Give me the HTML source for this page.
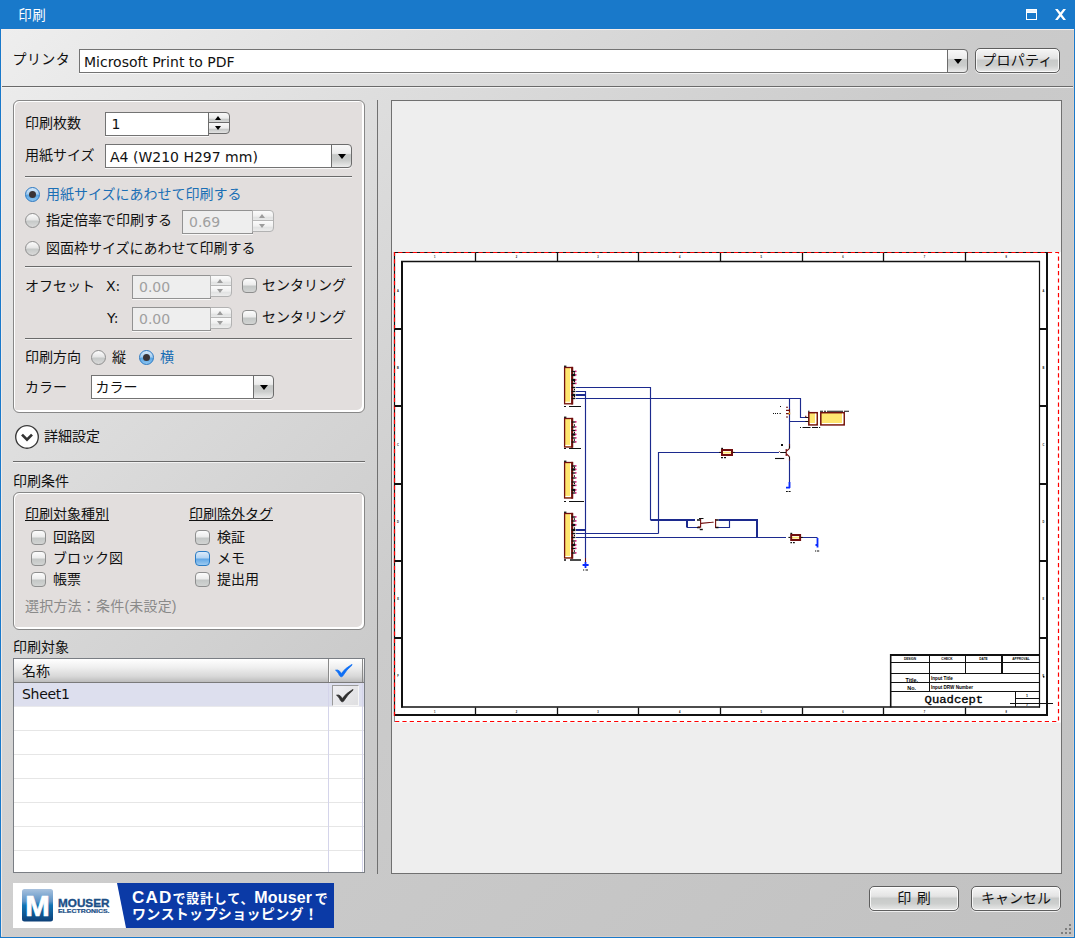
<!DOCTYPE html>
<html lang="ja">
<head>
<meta charset="utf-8">
<title>印刷</title>
<style>
*{box-sizing:border-box;margin:0;padding:0}
html,body{width:1075px;height:938px;overflow:hidden}
body{position:relative;background:#1979ca;font-family:"Liberation Sans","Noto Sans CJK JP",sans-serif;font-size:14px;color:#111;line-height:1}
.lat{font-family:"DejaVu Sans","Liberation Sans","Noto Sans CJK JP",sans-serif}
.abs,.abs-all *{position:absolute}
#win{position:absolute;left:1px;top:29px;width:1073px;height:908px;background:linear-gradient(135deg,#eeeeee 0%,#dedede 22%,#cbcbcb 50%,#c1c1c1 100%);overflow:hidden}
#title{position:absolute;left:0;top:0;width:1075px;height:29px;background:#1979ca;color:#fff}
#title .t{position:absolute;left:18.3px;top:8.5px;font-size:13.5px;letter-spacing:.4px;white-space:nowrap}
.txt{position:absolute;white-space:nowrap;height:20px;line-height:20px}
.sep{position:absolute;height:2px;border-top:1px solid #6a6a6a;border-bottom:1px solid #f2f2f2}
.grp{position:absolute;border:1px solid #878787;border-radius:6px;background:#e2dedd;box-shadow:inset 1px 1px 0 #fff,inset -2px -2px 0 #fff}
.inp{position:absolute;background:#fff;border:1px solid #737373;box-shadow:0 1px 0 rgba(255,255,255,.75)}
.inp.dis{background:#eeeeee;border-color:#929292;color:#a0a0a0}
.inp span{position:absolute;left:5px;top:0;line-height:23px;white-space:nowrap}
.cbtn{position:absolute;border:1px solid #6c6c6c;border-radius:0 4px 4px 0;background:linear-gradient(#f8f8f8 0%,#ececec 38%,#c6c8c7 44%,#cacccb 70%,#ececec 100%);box-shadow:0 1px 0 rgba(255,255,255,.75)}
.cbtn:after{content:"";position:absolute;left:5.5px;top:9.2px;border:4.5px solid transparent;border-top:5px solid #000;border-bottom:0}
.spin{position:absolute;width:22px;height:22px;border:1px solid #6c6c6c;border-radius:0 4px 4px 0;background:linear-gradient(#f8f8f8 0,#ececec 5px,#c8cac9 6.5px,#d6d8d7 9px,#6c6c6c 9px,#6c6c6c 10px,#f8f8f8 10px,#ececec 15px,#c8cac9 16.5px,#e2e2e2 20px)}
.spin i{position:absolute;left:6.3px;border:3.8px solid transparent}
.spin i.u{top:3px;border-bottom:4px solid #000;border-top:0}
.spin i.d{top:13px;border-top:4px solid #000;border-bottom:0}
.spin.dis{border-color:#b2b2b2;background:linear-gradient(#fbfbfb 0,#f0f0f0 5px,#e2e3e3 6.5px,#e8e9e9 9px,#b8b8b8 9px,#b8b8b8 10px,#fbfbfb 10px,#f0f0f0 15px,#e2e3e3 16.5px,#ececec 20px)}
.spin.dis i.u{border-bottom-color:#9c9c9c}
.spin.dis i.d{border-top-color:#9c9c9c}
.rad{position:absolute;width:15px;height:15px;border-radius:50%;border:1px solid #8e8e8e;background:linear-gradient(#fcfcfc 0%,#e6e6e6 45%,#c6c9c8 55%,#dadada 100%)}
.rad.on{border-color:#2a78c2;background:linear-gradient(#d6e8f8 0%,#a8cff0 45%,#5aa6e4 55%,#8cc4f0 100%)}
.rad.on:after{content:"";position:absolute;left:3px;top:3px;width:7px;height:7px;border-radius:50%;background:#3a3436}
.chk{position:absolute;width:15px;height:15px;border-radius:4px;border:1px solid #8e8e8e;background:linear-gradient(#fcfcfc 0%,#ececec 45%,#c4c7c6 55%,#d2d4d3 100%)}
.chk.hov{border-color:#2b7cc4;background:linear-gradient(#dcebfa 0%,#b4d4f2 45%,#62a8e6 55%,#9ccaf0 100%)}
.btn{position:absolute;height:25px;border:1px solid #5e5e5e;border-radius:5px;background:linear-gradient(#f6f6f6 0%,#e4e4e4 40%,#c8cac9 50%,#cdcfce 72%,#e9e9e9 100%);text-align:center;line-height:23px;white-space:nowrap;box-shadow:inset 0 0 0 1px rgba(255,255,255,.8),0 1px 0 rgba(255,255,255,.7)}
.blue{color:#1b6fb5}
.gray{color:#8a8a8a}
u{text-decoration:underline;text-underline-offset:1.4px;text-decoration-thickness:1px}
</style>
</head>
<body>
<div id="title"><span class="t">印刷</span>
<svg style="position:absolute;left:1026px;top:9px" width="11" height="11" viewBox="0 0 11 11" shape-rendering="crispEdges"><rect x="0" y="0" width="11" height="11" fill="#fff"/><rect x="1" y="1" width="9" height="2" fill="#eef5fb"/><rect x="1" y="4" width="9" height="6" fill="#1979ca"/></svg>
<svg style="position:absolute;left:1055px;top:9px" width="11" height="11" viewBox="0 0 11 11"><path d="M0 0 H2.7 L5.5 3.6 L8.3 0 H11 L6.9 5.5 L11 11 H8.3 L5.5 7.4 L2.7 11 H0 L4.1 5.5 Z" fill="#fff"/></svg>
</div>
<div id="win"><div id="o" style="position:absolute;left:-1px;top:-29px;width:1075px;height:938px">
<div style="position:absolute;left:1px;top:29px;width:1073px;height:1px;background:#f6eeea"></div><div style="position:absolute;left:1px;top:29px;width:1px;height:908px;background:#f6eeea;opacity:.8"></div><div style="position:absolute;left:1073px;top:30px;width:1px;height:907px;background:#d8cdc8;opacity:.8"></div><div style="position:absolute;left:1px;top:936px;width:1073px;height:1px;background:#d8cdc8;opacity:.8"></div>
<!--LEFT-->
<!-- printer row -->
<div class="txt" style="left:12.5px;top:49px;letter-spacing:.4px">プリンタ</div>
<div class="inp" style="left:79px;top:49px;width:869px;height:24px"><span class="lat" style="left:4px;top:1px">Microsoft Print to PDF</span></div>
<div class="cbtn" style="left:947px;top:49px;width:21px;height:24px"></div>
<div class="btn" style="left:975px;top:48px;width:85px;letter-spacing:.3px">プロパティ</div>
<div class="sep" style="left:2px;top:86px;width:1071px"></div>

<!-- group 1 -->
<div class="grp" style="left:13px;top:100px;width:352px;height:313px"></div>
<div class="txt" style="left:25px;top:113px">印刷枚数</div>
<div class="inp" style="left:105px;top:112px;width:104px;height:24px"><span class="lat" style="left:5.5px">1</span></div>
<div class="spin" style="left:208px;top:112px"><i class="u"></i><i class="d"></i></div>
<div class="txt" style="left:25px;top:145px">用紙サイズ</div>
<div class="inp" style="left:105px;top:144px;width:228px;height:24px"><span class="lat" style="left:4px;top:1px">A4 (W210 H297 mm)</span></div>
<div class="cbtn" style="left:331px;top:144px;width:21px;height:24px"></div>
<div class="sep" style="left:25px;top:176px;width:327px"></div>
<div class="rad on" style="left:25px;top:187px"></div>
<div class="txt blue" style="left:46px;top:184px">用紙サイズにあわせて印刷する</div>
<div class="rad" style="left:25px;top:213px"></div>
<div class="txt" style="left:46px;top:210px">指定倍率で印刷する</div>
<div class="inp dis" style="left:182px;top:210px;width:71px;height:24px"><span class="lat" style="left:6px">0.69</span></div>
<div class="spin dis" style="left:252px;top:210px"><i class="u"></i><i class="d"></i></div>
<div class="rad" style="left:25px;top:241px"></div>
<div class="txt" style="left:46px;top:238px">図面枠サイズにあわせて印刷する</div>
<div class="sep" style="left:25px;top:266px;width:327px"></div>
<div class="txt" style="left:25px;top:276px">オフセット</div>
<div class="txt lat" style="left:106px;top:276px">X:</div>
<div class="inp dis" style="left:132px;top:275px;width:79px;height:24px"><span class="lat" style="left:6px">0.00</span></div>
<div class="spin dis" style="left:210px;top:275px"><i class="u"></i><i class="d"></i></div>
<div class="chk" style="left:242px;top:278px"></div>
<div class="txt" style="left:262px;top:275px">センタリング</div>
<div class="txt lat" style="left:107px;top:308px">Y:</div>
<div class="inp dis" style="left:132px;top:307px;width:79px;height:24px"><span class="lat" style="left:6px">0.00</span></div>
<div class="spin dis" style="left:210px;top:307px"><i class="u"></i><i class="d"></i></div>
<div class="chk" style="left:242px;top:310px"></div>
<div class="txt" style="left:262px;top:307px">センタリング</div>
<div class="sep" style="left:25px;top:338px;width:327px"></div>
<div class="txt" style="left:25px;top:347px">印刷方向</div>
<div class="rad" style="left:91px;top:350px"></div>
<div class="txt" style="left:112px;top:347px">縦</div>
<div class="rad on" style="left:139px;top:350px"></div>
<div class="txt blue" style="left:160px;top:347px">横</div>
<div class="txt" style="left:25px;top:377px">カラー</div>
<div class="inp" style="left:91px;top:375px;width:164px;height:24px"><span style="left:3.5px">カラー</span></div>
<div class="cbtn" style="left:253px;top:375px;width:21px;height:24px"></div>

<!-- expander -->
<svg style="position:absolute;left:14px;top:424px" width="26" height="26" viewBox="0 0 26 26"><circle cx="13" cy="12.9" r="11.3" fill="#fff" stroke="#3a3a3a" stroke-width="1.35"/><path d="M8 10.6 L13 15.6 L18 10.6" fill="none" stroke="#333" stroke-width="2.7"/></svg>
<div class="txt" style="left:44px;top:426px">詳細設定</div>
<div class="sep" style="left:13px;top:461px;width:352px"></div>

<!-- group 2 -->
<div class="txt" style="left:13px;top:471px">印刷条件</div>
<div class="grp" style="left:13px;top:492px;width:352px;height:138px"></div>
<div class="txt" style="left:25px;top:504px"><u>印刷対象種別</u></div>
<div class="chk" style="left:31px;top:530px"></div><div class="txt" style="left:53px;top:527px">回路図</div>
<div class="chk" style="left:31px;top:551px"></div><div class="txt" style="left:53px;top:548px">ブロック図</div>
<div class="chk" style="left:31px;top:572px"></div><div class="txt" style="left:53px;top:569px">帳票</div>
<div class="txt" style="left:189px;top:504px"><u>印刷除外タグ</u></div>
<div class="chk" style="left:195px;top:530px"></div><div class="txt" style="left:217px;top:527px">検証</div>
<div class="chk hov" style="left:195px;top:551px"></div><div class="txt" style="left:217px;top:548px">メモ</div>
<div class="chk" style="left:195px;top:572px"></div><div class="txt" style="left:217px;top:569px">提出用</div>
<div class="txt gray" style="left:25px;top:596px;letter-spacing:.2px">選択方法：条件(未設定)</div>

<!-- table -->
<div class="txt" style="left:13px;top:637px">印刷対象</div>
<div id="tbl" style="position:absolute;left:13px;top:658px;width:352px;height:215px;background:#fff;border:1px solid #7a7e84;overflow:hidden">
<div style="position:absolute;left:0;top:0;width:350px;height:24px;background:linear-gradient(#ffffff 0%,#f0f0f0 35%,#d8d8d8 75%,#bcbcbc 100%);border-bottom:1px solid #7a7a7a"></div>
<div style="position:absolute;left:314px;top:0;width:1px;height:23px;background:#8a8a8a"></div>
<div style="position:absolute;left:315px;top:0;width:1px;height:23px;background:#fafafa"></div>
<div style="position:absolute;left:348px;top:0;width:1px;height:23px;background:#8a8a8a"></div>
<div class="txt" style="left:8px;top:2px">名称</div>
<div style="position:absolute;left:0;top:24px;width:350px;height:24px;background:#dddfee;border-bottom:1px solid #e9e9ec"></div>
<div class="txt lat" style="left:8px;top:25px;letter-spacing:-.3px">Sheet1</div>
<div style="position:absolute;left:0;top:48px;width:350px;height:168px;background:repeating-linear-gradient(#fff 0,#fff 23px,#e6e6e6 23px,#e6e6e6 24px)"></div>
<div style="position:absolute;left:314px;top:24px;width:1px;height:190px;background:#d4d4ea"></div>
<div style="position:absolute;left:348px;top:24px;width:1px;height:190px;background:#d4d4ea"></div>
<div style="position:absolute;left:318px;top:26px;width:27px;height:21px;border:1px solid;border-color:#9a9a9a #f6f6f6 #f6f6f6 #9a9a9a;background:linear-gradient(135deg,#f0f0f4,#dedee0)"></div>
<svg style="position:absolute;left:321px;top:5px" width="18" height="14" viewBox="0 0 18 14"><path d="M0.5 6.2 Q2.5 5.4 4.2 6.8 Q5.6 8.2 6.3 9.6 Q9.5 4.5 16.8 0.4 L17.2 1 Q11.5 5.6 7.6 12.2 Q6.6 13.2 5.4 12.6 Q4.2 11.6 3.6 9.8 Q2.6 7.6 0.5 6.2Z" fill="#0d6ef5" stroke="#0d6ef5" stroke-width="0.7"/></svg>
<svg style="position:absolute;left:322px;top:30px" width="18" height="14" viewBox="0 0 18 14"><path d="M0.5 6.2 Q2.5 5.4 4.2 6.8 Q5.6 8.2 6.3 9.6 Q9.5 4.5 16.8 0.4 L17.2 1 Q11.5 5.6 7.6 12.2 Q6.6 13.2 5.4 12.6 Q4.2 11.6 3.6 9.8 Q2.6 7.6 0.5 6.2Z" fill="#2e2e2e" stroke="#2e2e2e" stroke-width="0.7"/></svg>
</div>

<!--PREVIEW-->
<div style="position:absolute;left:377px;top:100px;width:1px;height:774px;background:#707070"></div>
<svg style="position:absolute;left:391px;top:100px" width="671" height="774" viewBox="391 100 671 774" font-family="Liberation Sans,sans-serif">
<rect x="391.5" y="100.5" width="670" height="773" fill="#eeeeee" stroke="#707070"/>
<rect x="394" y="252" width="667" height="470.5" fill="#fff"/>
<path d="M394.5 716 V252.5 H1048" fill="none" stroke="#111" stroke-width="1.2"/>
<path d="M394 715 H1047 V252" fill="none" stroke="#111" stroke-width="2"/>
<path d="M394.5 716 V252.5 H1058.5 V721.5 H394" fill="none" stroke="#ff0000" stroke-width="1.2" stroke-dasharray="4.2 3.1"/><path d="M394.5 716 V722" stroke="#8a8a8a" stroke-width="1"/>
<path d="M402 261 V707.5" fill="none" stroke="#111" stroke-width="2"/>
<path d="M401 261.5 H1040" fill="none" stroke="#111" stroke-width="1.5"/>
<path d="M1039.5 261 V707.5" fill="none" stroke="#111" stroke-width="1.2"/>
<path d="M401 707 H1040" fill="none" stroke="#111" stroke-width="1.6"/>
<path d="M475.5 253 V261 M475.5 707.5 V715 M557.5 253 V261 M557.5 707.5 V715 M638.5 253 V261 M638.5 707.5 V715 M720.5 253 V261 M720.5 707.5 V715 M802.5 253 V261 M802.5 707.5 V715 M883.5 253 V261 M883.5 707.5 V715 M965.5 253 V261 M965.5 707.5 V715 " stroke="#111" stroke-width="1.3" fill="none"/><path d="M394.5 329 H402 M1039.5 329 H1047 M394.5 406 H402 M1039.5 406 H1047 M394.5 484 H402 M1039.5 484 H1047 M394.5 561 H402 M1039.5 561 H1047 M394.5 638 H402 M1039.5 638 H1047 " stroke="#111" stroke-width="1.8" fill="none"/>
<text x="434.8" y="258.4" font-size="2.6" font-weight="bold" text-anchor="middle" fill="#111">1</text><text x="434.8" y="712.6" font-size="2.6" font-weight="bold" text-anchor="middle" fill="#111">1</text><text x="516.4" y="258.4" font-size="2.6" font-weight="bold" text-anchor="middle" fill="#111">2</text><text x="516.4" y="712.6" font-size="2.6" font-weight="bold" text-anchor="middle" fill="#111">2</text><text x="598.1" y="258.4" font-size="2.6" font-weight="bold" text-anchor="middle" fill="#111">3</text><text x="598.1" y="712.6" font-size="2.6" font-weight="bold" text-anchor="middle" fill="#111">3</text><text x="679.7" y="258.4" font-size="2.6" font-weight="bold" text-anchor="middle" fill="#111">4</text><text x="679.7" y="712.6" font-size="2.6" font-weight="bold" text-anchor="middle" fill="#111">4</text><text x="761.3" y="258.4" font-size="2.6" font-weight="bold" text-anchor="middle" fill="#111">5</text><text x="761.3" y="712.6" font-size="2.6" font-weight="bold" text-anchor="middle" fill="#111">5</text><text x="842.9" y="258.4" font-size="2.6" font-weight="bold" text-anchor="middle" fill="#111">6</text><text x="842.9" y="712.6" font-size="2.6" font-weight="bold" text-anchor="middle" fill="#111">6</text><text x="924.6" y="258.4" font-size="2.6" font-weight="bold" text-anchor="middle" fill="#111">7</text><text x="924.6" y="712.6" font-size="2.6" font-weight="bold" text-anchor="middle" fill="#111">7</text><text x="1006.2" y="258.4" font-size="2.6" font-weight="bold" text-anchor="middle" fill="#111">8</text><text x="1006.2" y="712.6" font-size="2.6" font-weight="bold" text-anchor="middle" fill="#111">8</text><text x="398" y="291.6" font-size="2.6" font-weight="bold" text-anchor="middle" fill="#111">A</text><text x="1043.4" y="291.6" font-size="2.6" font-weight="bold" text-anchor="middle" fill="#111">A</text><text x="398" y="368.8" font-size="2.6" font-weight="bold" text-anchor="middle" fill="#111">B</text><text x="1043.4" y="368.8" font-size="2.6" font-weight="bold" text-anchor="middle" fill="#111">B</text><text x="398" y="445.9" font-size="2.6" font-weight="bold" text-anchor="middle" fill="#111">C</text><text x="1043.4" y="445.9" font-size="2.6" font-weight="bold" text-anchor="middle" fill="#111">C</text><text x="398" y="523.1" font-size="2.6" font-weight="bold" text-anchor="middle" fill="#111">D</text><text x="1043.4" y="523.1" font-size="2.6" font-weight="bold" text-anchor="middle" fill="#111">D</text><text x="398" y="600.2" font-size="2.6" font-weight="bold" text-anchor="middle" fill="#111">E</text><text x="1043.4" y="600.2" font-size="2.6" font-weight="bold" text-anchor="middle" fill="#111">E</text><text x="398" y="677.4" font-size="2.6" font-weight="bold" text-anchor="middle" fill="#111">F</text><text x="1043.4" y="677.4" font-size="2.6" font-weight="bold" text-anchor="middle" fill="#111">F</text>
<path d="M576 387.5 H650.5 V520 M576 391.5 H585.5 V562 M576 398.5 H800.5 V417.5 H806 M789.5 398.5 V448 M789.5 459 V487 M789.5 421.5 H806 M658.5 533.5 V452.5 H721 M733.5 452.5 H779 M576 533.5 H658.5 M576 537.5 H786 M801 537.5 H817.5 M687 527.5 H697 M715 527.5 H729.5 V520" fill="none" stroke="#1c2a8e" stroke-width="1.15"/>
<path d="M576 395 H585.5 M576 530 H585.5 M650.5 520 H695 M718.5 520 H757 V537.5 M687 520 V527.5" fill="none" stroke="#1c2a8e" stroke-width="2"/>
<path d="M582.6 565 H588.6 M585.5 562 V568 M786 487.6 H790 M789.5 482 V488 M817.5 538 V547.5 M815.5 545 H818" fill="none" stroke="#0a2cff" stroke-width="1.8"/>
<path d="M585.5 558 V562" stroke="#720f0f" stroke-width="1"/>
<rect x="564.6" y="367.5" width="7.9" height="36.30000000000001" fill="#ffe670" stroke="#720f0f" stroke-width="1.3"/><rect x="570" y="368.5" width="1.2" height="34.30000000000001" fill="#fff"/><rect x="565.5" y="401.7" width="6" height="1.1" fill="#fff"/><rect x="571.1" y="366.9" width="2" height="37.500000000000014" fill="#720f0f"/><rect x="564" y="365.6" width="2.4" height="1.3" fill="#111"/><rect x="571.6" y="370.85" width="3.8" height="1.3" fill="#111"/><rect x="575.1" y="370.60" width="1.4" height="1.5" fill="#e0107a"/><rect x="571.6" y="373.85" width="3.8" height="2.3" fill="#111"/><rect x="575.1" y="374.10" width="1.4" height="1.5" fill="#e0107a"/><rect x="574" y="372.30" width="1" height="1.5" fill="#111"/><rect x="571.6" y="378.85" width="3.8" height="2.3" fill="#111"/><rect x="575.1" y="379.10" width="1.4" height="1.5" fill="#e0107a"/><rect x="571.6" y="382.85" width="3.8" height="1.3" fill="#111"/><rect x="575.1" y="382.60" width="1.4" height="1.5" fill="#e0107a"/><rect x="574" y="380.80" width="1" height="1.5" fill="#111"/><rect x="571.6" y="386.85" width="3.8" height="1.3" fill="#111"/><rect x="571.6" y="390.85" width="3.8" height="1.3" fill="#111"/><rect x="574" y="388.80" width="1" height="1.5" fill="#111"/><rect x="571.6" y="393.85" width="3.8" height="2.3" fill="#111"/><rect x="571.6" y="397.85" width="3.8" height="1.3" fill="#111"/><rect x="574" y="395.80" width="1" height="1.5" fill="#111"/>
<rect x="564.6" y="418.5" width="7.9" height="28.5" fill="#ffe670" stroke="#720f0f" stroke-width="1.3"/><rect x="570" y="419.5" width="1.2" height="26.5" fill="#fff"/><rect x="565.5" y="444.9" width="6" height="1.1" fill="#fff"/><rect x="571.1" y="417.9" width="2" height="29.7" fill="#720f0f"/><rect x="564" y="416.6" width="2.4" height="1.3" fill="#111"/><rect x="571.6" y="421.35" width="3.8" height="1.3" fill="#111"/><rect x="575.1" y="421.10" width="1.4" height="1.5" fill="#e0107a"/><rect x="571.6" y="426.35" width="3.8" height="1.3" fill="#111"/><rect x="575.1" y="426.10" width="1.4" height="1.5" fill="#e0107a"/><rect x="574" y="424.30" width="1" height="1.5" fill="#111"/><rect x="571.6" y="429.85" width="3.8" height="1.3" fill="#111"/><rect x="575.1" y="429.60" width="1.4" height="1.5" fill="#e0107a"/><rect x="571.6" y="433.35" width="3.8" height="2.3" fill="#111"/><rect x="575.1" y="433.60" width="1.4" height="1.5" fill="#e0107a"/><rect x="574" y="431.80" width="1" height="1.5" fill="#111"/><rect x="571.6" y="437.35" width="3.8" height="1.3" fill="#111"/><rect x="575.1" y="437.10" width="1.4" height="1.5" fill="#e0107a"/><rect x="571.6" y="441.35" width="3.8" height="1.3" fill="#111"/><rect x="575.1" y="441.10" width="1.4" height="1.5" fill="#e0107a"/><rect x="574" y="439.30" width="1" height="1.5" fill="#111"/>
<rect x="564.6" y="462.5" width="7.9" height="35.5" fill="#ffe670" stroke="#720f0f" stroke-width="1.3"/><rect x="570" y="463.5" width="1.2" height="33.5" fill="#fff"/><rect x="565.5" y="495.9" width="6" height="1.1" fill="#fff"/><rect x="571.1" y="461.9" width="2" height="36.7" fill="#720f0f"/><rect x="564" y="460.6" width="2.4" height="1.3" fill="#111"/><rect x="571.6" y="465.35" width="3.8" height="1.3" fill="#111"/><rect x="575.1" y="465.10" width="1.4" height="1.5" fill="#e0107a"/><rect x="571.6" y="468.35" width="3.8" height="2.3" fill="#111"/><rect x="575.1" y="468.60" width="1.4" height="1.5" fill="#e0107a"/><rect x="574" y="466.80" width="1" height="1.5" fill="#111"/><rect x="571.6" y="472.35" width="3.8" height="1.3" fill="#111"/><rect x="575.1" y="472.10" width="1.4" height="1.5" fill="#e0107a"/><rect x="571.6" y="477.35" width="3.8" height="1.3" fill="#111"/><rect x="575.1" y="477.10" width="1.4" height="1.5" fill="#e0107a"/><rect x="574" y="475.30" width="1" height="1.5" fill="#111"/><rect x="571.6" y="481.35" width="3.8" height="1.3" fill="#111"/><rect x="575.1" y="481.10" width="1.4" height="1.5" fill="#e0107a"/><rect x="571.6" y="484.85" width="3.8" height="1.3" fill="#111"/><rect x="575.1" y="484.60" width="1.4" height="1.5" fill="#e0107a"/><rect x="574" y="482.80" width="1" height="1.5" fill="#111"/><rect x="571.6" y="488.85" width="3.8" height="2.3" fill="#111"/><rect x="575.1" y="489.10" width="1.4" height="1.5" fill="#e0107a"/><rect x="571.6" y="492.35" width="3.8" height="1.3" fill="#111"/><rect x="575.1" y="492.10" width="1.4" height="1.5" fill="#e0107a"/><rect x="574" y="490.30" width="1" height="1.5" fill="#111"/>
<rect x="564.6" y="513.5" width="7.9" height="44.5" fill="#ffe670" stroke="#720f0f" stroke-width="1.3"/><rect x="570" y="514.5" width="1.2" height="42.5" fill="#fff"/><rect x="565.5" y="555.9" width="6" height="1.1" fill="#fff"/><rect x="571.1" y="512.9" width="2" height="45.7" fill="#720f0f"/><rect x="564" y="511.6" width="2.4" height="1.3" fill="#111"/><rect x="571.6" y="516.35" width="3.8" height="1.3" fill="#111"/><rect x="575.1" y="516.10" width="1.4" height="1.5" fill="#e0107a"/><rect x="571.6" y="520.35" width="3.8" height="1.3" fill="#111"/><rect x="575.1" y="520.10" width="1.4" height="1.5" fill="#e0107a"/><rect x="574" y="518.30" width="1" height="1.5" fill="#111"/><rect x="571.6" y="523.85" width="3.8" height="2.3" fill="#111"/><rect x="575.1" y="524.10" width="1.4" height="1.5" fill="#e0107a"/><rect x="571.6" y="528.85" width="3.8" height="2.3" fill="#111"/><rect x="574" y="527.30" width="1" height="1.5" fill="#111"/><rect x="571.6" y="532.85" width="3.8" height="1.3" fill="#111"/><rect x="571.6" y="536.85" width="3.8" height="1.3" fill="#111"/><rect x="574" y="534.80" width="1" height="1.5" fill="#111"/><rect x="571.6" y="540.35" width="3.8" height="1.3" fill="#111"/><rect x="575.1" y="540.10" width="1.4" height="1.5" fill="#e0107a"/><rect x="571.6" y="543.85" width="3.8" height="2.3" fill="#111"/><rect x="575.1" y="544.10" width="1.4" height="1.5" fill="#e0107a"/><rect x="574" y="542.30" width="1" height="1.5" fill="#111"/><rect x="571.6" y="547.85" width="3.8" height="1.3" fill="#111"/><rect x="575.1" y="547.60" width="1.4" height="1.5" fill="#e0107a"/><rect x="571.6" y="552.35" width="3.8" height="1.3" fill="#111"/><rect x="575.1" y="552.10" width="1.4" height="1.5" fill="#e0107a"/><rect x="574" y="550.30" width="1" height="1.5" fill="#111"/>
<path d="M564 406.5 h2 M569 406.5 h12 M564 448.5 h2 M569 448.5 h12 M564 501.5 h2 M569 501.5 h15" stroke="#111" stroke-width="1" fill="none"/>
<path d="M564 560 h2 M570 560 h11" stroke="#111" stroke-width="1.7" fill="none"/>
<path d="M583 570 h1.2 M585.5 570 h2.5 M786 491.5 h1.8 M788.6 491.5 h2 M815 551 h1 M816.8 551 h2.4 M721 457.6 h2 M724 457.6 h2 M790.4 542.6 h1.6 M793 542.6 h1.8" stroke="#111" stroke-width="1.1" fill="none"/>
<rect x="722" y="450" width="10" height="5" fill="#ffe670" stroke="#720f0f" stroke-width="2"/><rect x="723" y="451" width="8" height="0.9" fill="#fff" opacity=".85"/><rect x="723" y="453.2" width="8" height="0.8" fill="#fff" opacity=".6"/><rect x="719.2" y="451.9" width="2" height="1.1" fill="#111"/><rect x="732.8" y="451.9" width="1.8" height="1.1" fill="#111"/><rect x="721.2" y="447.8" width="1.8" height="1.2" fill="#111"/>
<rect x="791.2" y="535" width="8.9" height="5" fill="#ffe670" stroke="#720f0f" stroke-width="2"/><rect x="792.2" y="536" width="6.9" height="0.9" fill="#fff" opacity=".85"/><rect x="792.2" y="538.2" width="6.9" height="0.8" fill="#fff" opacity=".6"/><rect x="788.4000000000001" y="536.9" width="2" height="1.1" fill="#111"/><rect x="800.9" y="536.9" width="1.8" height="1.1" fill="#111"/><rect x="790.4000000000001" y="532.8" width="1.8" height="1.2" fill="#111"/>
<path d="M697 520 h4 M697 527.5 h3 M715.5 520 h3 M715.5 527.5 h3" stroke="#111" stroke-width="1.4" fill="none"/>
<path d="M700.6 519 V527.8 M701 523.4 L712 522.3 M715.6 519 V527.8 M698 527 h2.4 M711.6 522.3 h2" stroke="#720f0f" stroke-width="1.1" fill="none"/>
<rect x="699.8" y="528.8" width="3" height="1.4" fill="#111"/><rect x="699" y="518" width="4.5" height="1" fill="#111"/>
<path d="M786.2 449 V456 M786.2 451.4 L789.3 448.6 M786.2 453.6 L789.3 456.6" stroke="#720f0f" stroke-width="1.2" fill="none"/><path d="M779.3 451.4 l.8 .8" stroke="#720f0f" stroke-width="1"/>
<path d="M780.2 452.5 H786 M789.5 445.6 V448.8 M789.5 456.4 V459.4" stroke="#111" stroke-width="1.1" fill="none"/><path d="M789.5 444 V445.6 M789.5 459.4 V460.4" stroke="#720f0f" stroke-width="1.1"/>
<rect x="781" y="444" width="2" height="2" fill="#111"/><path d="M775 458.5 H784.2" stroke="#111" stroke-width="1.1"/>
<path d="M786 407.2 h2 M786 410.4 h4 M786 413.6 h4 M786 417 h2 M789.5 409 v6" stroke="#720f0f" stroke-width="1.1" fill="none"/><rect x="788.6" y="412.6" width="1.6" height="1.6" fill="#f4c020"/>
<path d="M780 406.5 h1 M773 413.5 h1 M775 413.5 h1 M777 413.5 h1 M779.5 413.5 h1.3" stroke="#111" stroke-width="1"/>
<rect x="808.8" y="412.7" width="8.4" height="12.2" fill="#ffe670" stroke="#720f0f" stroke-width="1.5"/><rect x="815" y="413.6" width="1.3" height="10" fill="#fff"/><rect x="810" y="423" width="6" height="1.1" fill="#fff"/>
<rect x="820.8" y="412.7" width="23.4" height="12.2" fill="#ffe670" stroke="#720f0f" stroke-width="1.5"/><rect x="842" y="413.6" width="1.3" height="10" fill="#fff"/><rect x="822" y="423" width="21" height="1.1" fill="#fff"/>
<path d="M805.4 417.5 h3 M805.4 421.5 h3" stroke="#111" stroke-width="1"/><path d="M805 416.3 h1.4" stroke="#720f0f" stroke-width="1"/>
<path d="M808 411.3 h1.5 M820 411.3 h3 M824 411.3 h2 M827 411.3 h16 M844 411.3 h5 M800 427.5 h1 M802.5 427.5 h8 M812 427.5 h6 M819 427.5 h1.2" stroke="#111" stroke-width="1.1" fill="none"/>
<path d="M890 655 H1040" fill="none" stroke="#111" stroke-width="2"/><path d="M890.7 654 V707.5" fill="none" stroke="#111" stroke-width="1.6"/>
<path d="M890.5 662.5 H1040 M890.5 673.5 H1040 M890.5 682.5 H1040 M890.5 691.5 H1040 M929.5 655 V691.5 M965.5 655 V673.5 M1015.5 691.5 V707 M1015.5 698.5 H1040 M1010 703.5 H1053" fill="none" stroke="#111" stroke-width="1"/>
<path d="M1002 655 V673.5" stroke="#111" stroke-width="2"/>
<text x="910" y="660.4" font-size="3.2" font-weight="bold" text-anchor="middle">DESIGN</text><text x="947" y="660.4" font-size="3.2" font-weight="bold" text-anchor="middle">CHECK</text><text x="983.5" y="660.4" font-size="3.2" font-weight="bold" text-anchor="middle">DATE</text><text x="1021" y="660.4" font-size="3.2" font-weight="bold" text-anchor="middle">APPROVAL</text>
<text x="918" y="681.6" font-size="5.4" font-weight="bold" text-anchor="end">Title.</text><text x="916" y="690.4" font-size="5.4" font-weight="bold" text-anchor="end">No.</text>
<text x="931" y="680" font-size="4.6" font-weight="bold">Input Title</text><text x="931" y="689" font-size="4.6" font-weight="bold">Input DRW Number</text>
<text x="924.6" y="702.9" font-size="10.6" font-family="Liberation Mono,monospace" textLength="58.6" lengthAdjust="spacingAndGlyphs" fill="#000" stroke="#000" stroke-width=".3">Quadcept</text>
<text x="1027" y="697.4" font-size="3.6" font-weight="bold" text-anchor="middle">1</text><text x="1027" y="706" font-size="4.4" font-weight="bold" text-anchor="middle">/</text><path d="M1030.5 703.5 h3" stroke="#111" stroke-width="1"/>
<rect x="1043" y="676" width="1.4" height="1.6" fill="#111"/>
</svg>
<!--/PREVIEW-->
<!--BOTTOM-->
<!-- banner -->
<div style="position:absolute;left:13px;top:883px;width:321px;height:45px;background:#0b3aa6;overflow:hidden">
<svg style="position:absolute;left:0;top:0" width="321" height="45" viewBox="0 0 321 45">
<defs><linearGradient id="mg" x1="0" y1="0" x2="0" y2="1"><stop offset="0" stop-color="#a9c2de"/><stop offset=".38" stop-color="#5d93c6"/><stop offset=".5" stop-color="#1374b4"/><stop offset="1" stop-color="#0d3f77"/></linearGradient></defs>
<path d="M0 0 H104 L113 45 H0 Z" fill="#fff"/>
<rect x="9" y="6" width="31" height="32.5" rx="2.5" fill="url(#mg)"/>
<text x="24.4" y="33.4" font-size="29" font-weight="bold" fill="#fff" stroke="#fff" stroke-width=".7" text-anchor="middle" font-family="Liberation Sans,sans-serif" textLength="24.5" lengthAdjust="spacingAndGlyphs">M</text>
<text x="45" y="23.6" font-size="11.4" font-weight="bold" fill="#1b4f86" stroke="#1b4f86" stroke-width=".35" font-family="Liberation Sans,sans-serif" textLength="51.5" lengthAdjust="spacingAndGlyphs">MOUSER</text>
<text x="45" y="29.6" font-size="5.6" font-weight="bold" fill="#1b4f86" stroke="#1b4f86" stroke-width=".2" font-family="Liberation Sans,sans-serif" textLength="51.5" lengthAdjust="spacingAndGlyphs">ELECTRONICS.</text>
</svg>
<div style="position:absolute;left:119px;top:6.7px;color:#fff;font-weight:bold;white-space:nowrap;font-size:13px;line-height:16px;height:16px;letter-spacing:.8px"><span style="font-size:17px;font-family:'Liberation Sans',sans-serif;letter-spacing:1.2px">CAD</span>で設計して、<span style="font-size:16px;font-family:'Liberation Sans',sans-serif;letter-spacing:.2px">Mouser</span><span style="margin-left:2.5px">で</span></div>
<div style="position:absolute;left:119px;top:22.6px;color:#fff;font-weight:bold;white-space:nowrap;font-size:14px;line-height:16px;height:16px;letter-spacing:.35px">ワンストップショッピング！</div>
</div>
<div class="btn" style="left:869px;top:886px;width:90px;word-spacing:1.5px">印 刷</div>
<div class="btn" style="left:971px;top:886px;width:90px">キャンセル</div>
<svg style="position:absolute;left:1060px;top:923px" width="12" height="12" viewBox="0 0 12 12" fill="#7e7e7e"><rect x="9" y="1" width="2" height="2"/><rect x="5" y="5" width="2" height="2"/><rect x="9" y="5" width="2" height="2"/><rect x="1" y="9" width="2" height="2"/><rect x="5" y="9" width="2" height="2"/><rect x="9" y="9" width="2" height="2"/></svg>

</div></div>
</body>
</html>
